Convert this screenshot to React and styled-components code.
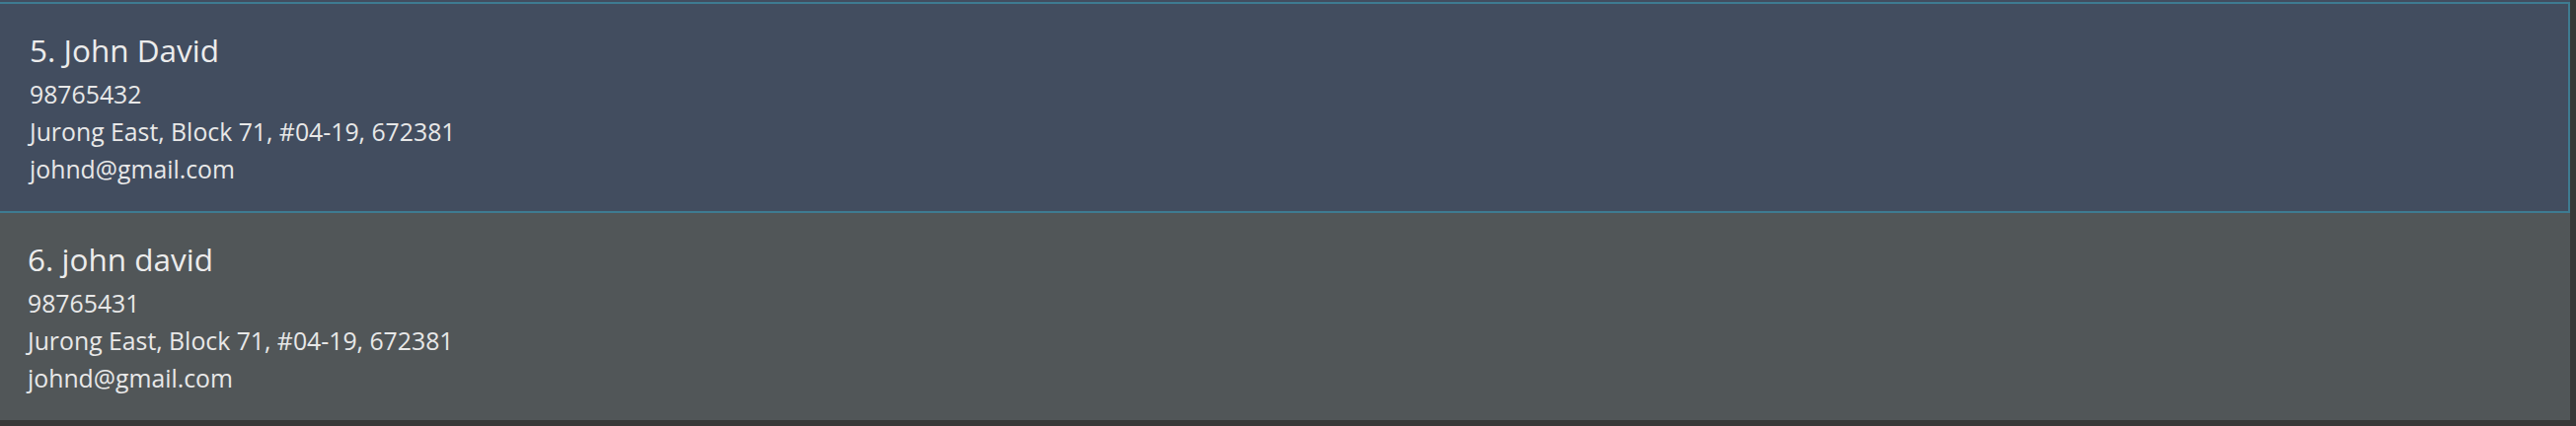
import React from "react";
import styled, { createGlobalStyle } from "styled-components";

const Global = createGlobalStyle`
  html, body { margin: 0; padding: 0; background: #383838; }
  body { width: 2610px; height: 432px; overflow: hidden; }
`;

const List = styled.div`
  width: 2604px;
  display: flex;
  flex-direction: column;
  font-family: "Open Sans", "Noto Sans", sans-serif;
`;

const Cell = styled.div`
  box-sizing: border-box;
  height: ${(p) => (p.$selected ? 216 : 210)}px;
  padding-top: ${(p) => (p.$selected ? 2 : 0)}px;
  background: ${(p) => (p.$selected ? "#424d5f" : "#515658")};
`;

const Pane = styled.div`
  box-sizing: border-box;
  height: 100%;
  display: flex;
  flex-direction: column;
  padding: ${(p) => (p.$selected ? "22px 0 0 30px" : "22px 0 0 28px")};
  border: ${(p) => (p.$selected ? "2px solid #3e7b91" : "none")};
  border-left: none;
  color: #e8e8e8;
`;

const Name = styled.div`
  font-size: 31.5px;
  line-height: 50px;
  color: #ececec;
  white-space: nowrap;
`;

const Detail = styled.div`
  font-size: 24.8px;
  line-height: 38px;
  white-space: nowrap;
`;

const people = [
  { id: 5, name: "John David", phone: "98765432", address: "Jurong East, Block 71, #04-19, 672381", email: "johnd@gmail.com", selected: true },
  { id: 6, name: "john david", phone: "98765431", address: "Jurong East, Block 71, #04-19, 672381", email: "johnd@gmail.com", selected: false },
];

export default function App() {
  return (
    <>
      <Global />
      <List>
        {people.map((p) => (
          <Cell key={p.id} $selected={p.selected}>
            <Pane $selected={p.selected}>
              <Name>{p.id}. {p.name}</Name>
              <Detail>{p.phone}</Detail>
              <Detail>{p.address}</Detail>
              <Detail>{p.email}</Detail>
            </Pane>
          </Cell>
        ))}
      </List>
    </>
  );
}
